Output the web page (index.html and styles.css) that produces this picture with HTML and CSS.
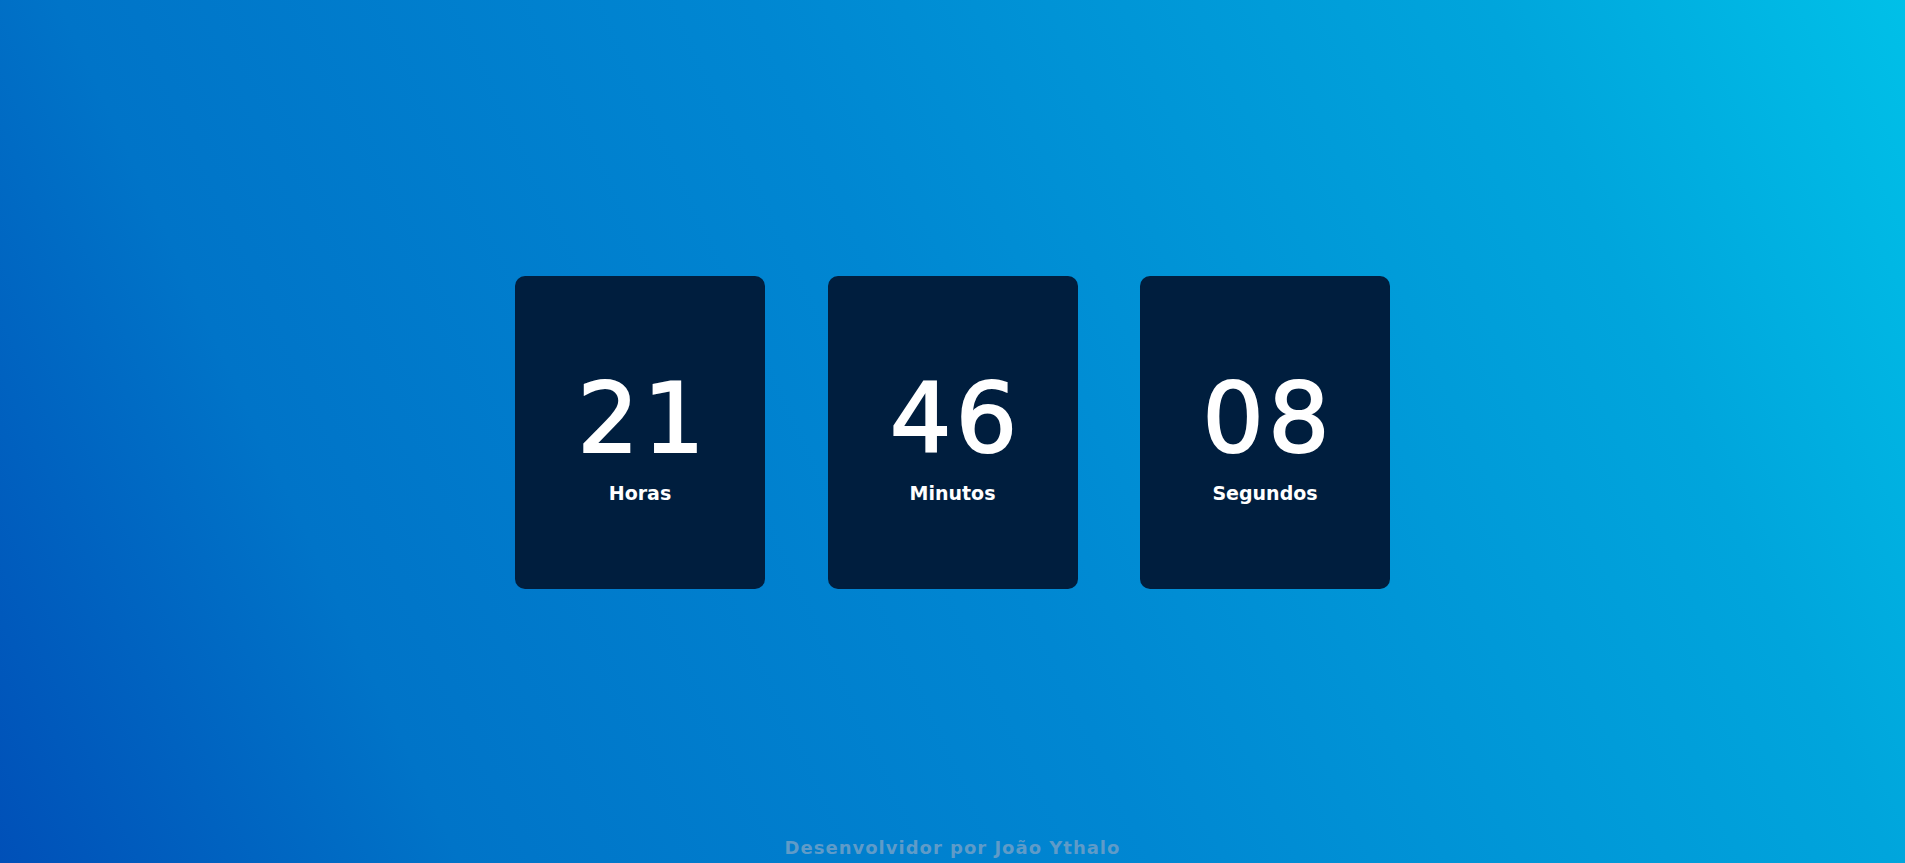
FILE: index.html
```html
<!DOCTYPE html>
<html lang="pt-BR">
<head>
<meta charset="UTF-8">
<title>Relógio</title>
<link rel="stylesheet" href="styles.css">
</head>
<body>
  <main class="clock">
    <div class="card">
      <span class="num">21</span>
      <span class="label">Horas</span>
    </div>
    <div class="card">
      <span class="num">46</span>
      <span class="label">Minutos</span>
    </div>
    <div class="card">
      <span class="num">08</span>
      <span class="label">Segundos</span>
    </div>
  </main>
  <footer class="footer">Desenvolvidor por João Ythalo</footer>
</body>
</html>
```
FILE: styles.css
```css
* { box-sizing: border-box; }
html, body { margin: 0; padding: 0; }
body {
  height: 100vh;
  overflow: hidden;
  display: flex;
  flex-direction: column;
  font-family: "DejaVu Sans", "Liberation Sans", sans-serif;
  background: linear-gradient(65deg,
    rgb(0, 80, 184) 0%,
    rgb(0, 116, 200) 20%,
    rgb(0, 135, 210) 50%,
    rgb(0, 165, 220) 82%,
    rgb(0, 192, 232) 100%);
}
.clock {
  flex: 1;
  display: flex;
  justify-content: center;
  align-items: center;
  gap: 62.5px;
  padding-top: 29px;
}
.card {
  width: 250px;
  height: 313px;
  background: #001e3e;
  border-radius: 10px;
  display: flex;
  flex-direction: column;
  align-items: center;
  justify-content: center;
  padding-top: 10px;
  color: #fff;
}
.num {
  font-size: 97px;
  font-weight: normal;
  -webkit-text-stroke: 2px #fff;
  letter-spacing: 4px;
  padding-left: 6px;
  line-height: 97px;
  height: 97px;
  margin-bottom: 15px;
}
.label {
  font-size: 19px;
  font-weight: bold;
  line-height: 23px;
}
.footer {
  text-align: center;
  font-size: 18px;
  font-weight: bold;
  letter-spacing: 1px;
  line-height: 24px;
  padding-bottom: 3px;
  color: #5f9bc8;
}
```
